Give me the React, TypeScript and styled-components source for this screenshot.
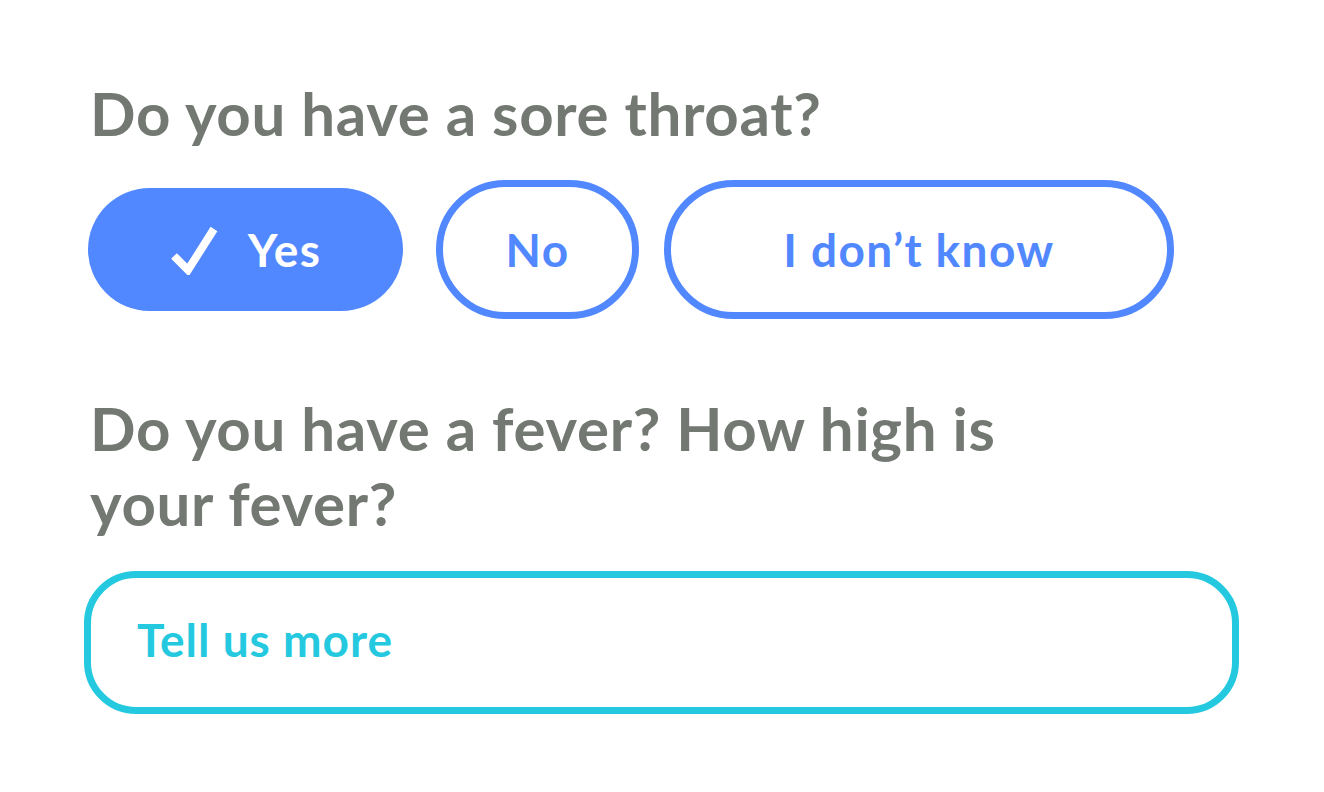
import styled, { createGlobalStyle } from "styled-components";

const GlobalStyle = createGlobalStyle`
  body {
    margin: 0;
    background: #ffffff;
    font-family: "Lato", "Liberation Sans", sans-serif;
  }
`;

const BLUE = "#5288ff";
const CYAN = "#24c9df";
const GRAY = "#737873";

const options = [
  { label: "Yes", selected: true, width: 315 },
  { label: "No", selected: false, width: 187 },
  { label: "I don\u2019t know", selected: false, width: 494 },
];

const CheckIcon = () => (
  <svg width="48" height="50" viewBox="0 0 48 50" fill="none">
    <path
      d="M4 31 L18 45 L44 4"
      stroke="#ffffff"
      strokeWidth="8"
      strokeLinejoin="miter"
    />
  </svg>
);

const App = () => {
  return (
    <>
      <GlobalStyle />
      <Page>
        <Question>Do you have a sore throat?</Question>
        <OptionRow>
          {options.map((opt) => (
            <OptionButton
              key={opt.label}
              $selected={opt.selected}
              $width={opt.width}
            >
              {opt.selected && <CheckIcon />}
              <span>{opt.label}</span>
            </OptionButton>
          ))}
        </OptionRow>
        <Question $wrap>Do you have a fever? How high is your fever?</Question>
        <MoreField placeholder="Tell us more" />
      </Page>
    </>
  );
};

export default App;

const Page = styled.div`
  display: flex;
  flex-direction: column;
  align-items: flex-start;
  padding: 76px 0 0 88px;
`;

const Question = styled.h2<{ $wrap?: boolean }>`
  margin: 0;
  padding-left: 2px;
  font-size: 60px;
  font-weight: 700;
  line-height: ${(p) => (p.$wrap ? "75px" : "74px")};
  letter-spacing: 0.7px;
  color: ${GRAY};
  max-width: ${(p) => (p.$wrap ? "960px" : "none")};
`;

const OptionRow = styled.div`
  display: flex;
  align-items: center;
  gap: 41px;
  margin-top: 38px;
  margin-bottom: 80px;
`;

const OptionButton = styled.button<{ $selected: boolean; $width: number }>`
  display: flex;
  align-items: center;
  justify-content: center;
  gap: 30px;
  width: ${(p) => p.$width}px;
  height: 123px;
  border: none;
  border-radius: 62px;
  padding: 0;
  font-family: "Lato", "Liberation Sans", sans-serif;
  font-size: 46px;
  font-weight: 700;
  letter-spacing: 1.4px;
  cursor: pointer;
  background: ${(p) => (p.$selected ? BLUE : "#ffffff")};
  color: ${(p) => (p.$selected ? "#ffffff" : BLUE)};
  outline: ${(p) => (p.$selected ? "none" : `7px solid ${BLUE}`)};
  outline-offset: 1px;

  svg {
    margin-left: 0;
    margin-top: 0;
  }
`;

const MoreField = styled.input`
  box-sizing: border-box;
  width: 1155px;
  height: 143px;
  margin: 30px 0 0 -4px;
  border: 7px solid ${CYAN};
  border-radius: 52px;
  padding: 0 0 6px 46px;
  font-family: "Lato", "Liberation Sans", sans-serif;
  font-size: 46px;
  font-weight: 700;
  letter-spacing: 1px;
  color: ${CYAN};
  background: #ffffff;

  &::placeholder {
    color: ${CYAN};
    opacity: 1;
  }

  &:focus {
    outline: none;
  }
`;
